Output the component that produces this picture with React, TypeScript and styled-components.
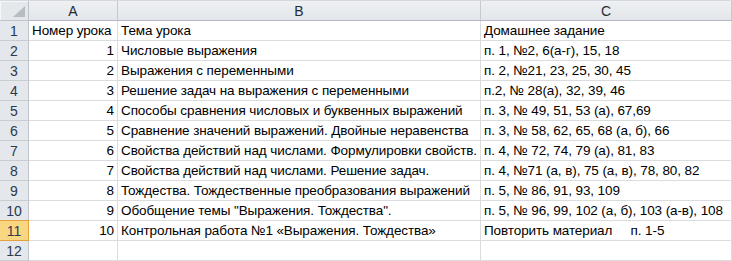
import React from "react";
import styled, { createGlobalStyle } from "styled-components";

const GlobalStyle = createGlobalStyle`
  html, body { margin: 0; padding: 0; background: #fff; }
  body { font-family: "Liberation Sans", Arial, sans-serif; }
`;

const COLS = "29px 89px 363px 1fr";

const Sheet = styled.div`
  width: 732px;
  height: 261px;
  overflow: hidden;
  background: #fff;
  color: #000;
  font-size: 13.5px;
  letter-spacing: -0.1px;
  border-top: 1px solid #d5d8dc;
  box-sizing: border-box;
`;

const Row = styled.div<{ $h: number }>`
  display: grid;
  grid-template-columns: ${COLS};
  height: ${(p) => p.$h}px;
`;

const Corner = styled.div`
  position: relative;
  background: #e4e7eb;
  border-right: 1px solid #bfc4ca;
  border-bottom: 1px solid #bfc4ca;
  box-shadow: inset 1px 1px 0 #f6f7f8;
`;

const CornerMark = styled.svg`
  position: absolute;
  right: 3px;
  bottom: 3px;
`;

const ColHead = styled.div`
  display: flex;
  align-items: center;
  justify-content: center;
  background: linear-gradient(#eef0f3, #e3e6ea);
  border-right: 1px solid #c5cad0;
  border-bottom: 1px solid #b3b9c0;
  color: #262b33;
  font-size: 14px;
  letter-spacing: 0;
  padding-top: 1px;
`;

const RowHead = styled.div<{ $active?: boolean }>`
  display: flex;
  align-items: center;
  justify-content: center;
  background: ${(p) => (p.$active ? "#f9d782" : "#e4e7eb")};
  border-right: 1px solid ${(p) => (p.$active ? "#e3a23b" : "#bfc4ca")};
  border-bottom: 1px solid ${(p) => (p.$active ? "#e3a23b" : "#c9cdd2")};
  ${(p) => (p.$active ? "box-shadow: inset 0 1px 0 #e3a23b; margin-top: -1px;" : "")}
  color: #2a3a4f;
  font-size: 14px;
  letter-spacing: 0;
  padding-top: 1px;
`;

const Cell = styled.div<{ $right?: boolean }>`
  display: flex;
  align-items: flex-end;
  justify-content: ${(p) => (p.$right ? "flex-end" : "flex-start")};
  border-right: 1px solid #dadcdd;
  border-bottom: 1px solid #dadcdd;
  padding: 0 3px 2px 3px;
  white-space: pre;
  overflow: hidden;
  min-width: 0;
`;

type Lesson = { n: string; topic: string; hw: string };

const rows: Lesson[] = [
  { n: "Номер урока", topic: "Тема урока", hw: "Домашнее задание" },
  { n: "1", topic: "Числовые выражения", hw: "п. 1, №2, 6(а-г), 15, 18" },
  { n: "2", topic: "Выражения с переменными", hw: "п. 2, №21, 23, 25, 30, 45" },
  { n: "3", topic: "Решение задач на выражения с переменными", hw: "п.2, № 28(а), 32, 39, 46" },
  { n: "4", topic: "Способы сравнения числовых и буквенных выражений", hw: "п. 3, № 49, 51, 53 (а), 67,69" },
  { n: "5", topic: "Сравнение значений выражений. Двойные неравенства", hw: "п. 3, № 58, 62, 65, 68 (а, б), 66" },
  { n: "6", topic: "Свойства действий над числами. Формулировки свойств.", hw: "п. 4, № 72, 74, 79 (а), 81, 83" },
  { n: "7", topic: "Свойства действий над числами. Решение задач.", hw: "п. 4, №71 (а, в), 75 (а, в), 78, 80, 82" },
  { n: "8", topic: "Тождества. Тождественные преобразования выражений", hw: "п. 5, № 86, 91, 93, 109" },
  { n: "9", topic: "Обобщение темы \"Выражения. Тождества\".", hw: "п. 5, № 96, 99, 102 (а, б), 103 (а-в), 108" },
  { n: "10", topic: "Контрольная работа №1 «Выражения. Тождества»", hw: "Повторить материал     п. 1-5" },
  { n: "", topic: "", hw: "" },
];

export default function App() {
  return (
    <>
      <GlobalStyle />
      <Sheet>
        <Row $h={20}>
          <Corner>
            <CornerMark width="12" height="11" viewBox="0 0 12 11">
              <polygon points="12,0 12,11 0,11" fill="#b6bcc3" />
            </CornerMark>
          </Corner>
          <ColHead>A</ColHead>
          <ColHead>B</ColHead>
          <ColHead>C</ColHead>
        </Row>
        {rows.map((r, i) => (
          <Row $h={20} key={i}>
            <RowHead $active={i === 10}>{i + 1}</RowHead>
            <Cell $right={i > 0}>{r.n}</Cell>
            <Cell>{r.topic}</Cell>
            <Cell>{r.hw}</Cell>
          </Row>
        ))}
      </Sheet>
    </>
  );
}
